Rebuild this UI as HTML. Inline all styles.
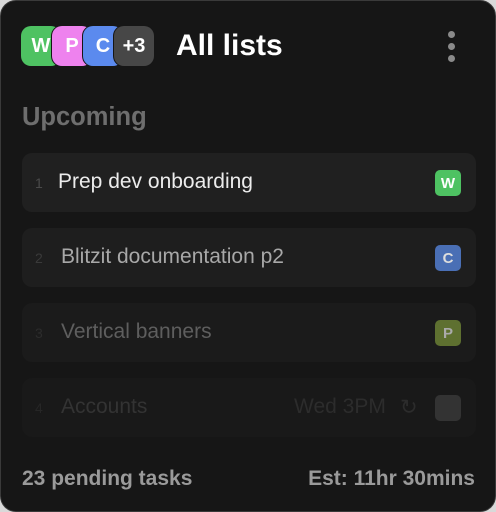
<!DOCTYPE html>
<html><head><style>
html,body{margin:0;padding:0;background:#d9d9d9;}
body{width:496px;height:512px;overflow:hidden;font-family:"Liberation Sans",sans-serif;}
.card{position:absolute;left:0;top:0;width:494px;height:510px;background:#161616;border:1px solid #3a3a3a;border-radius:16px;}
.av{position:absolute;top:25px;width:40px;height:40px;border-radius:10px;color:#fff;font-weight:bold;font-size:20px;display:flex;align-items:center;justify-content:center;box-shadow:0 0 0 1px #161616;}
.title{position:absolute;left:175px;top:28px;color:#fff;font-weight:bold;font-size:30px;}
.dots{position:absolute;left:447px;top:30px;}
.dots i{display:block;width:7px;height:7px;border-radius:50%;background:#8a8a8a;margin-bottom:5px;}
.up{position:absolute;left:21px;top:102px;color:#6e6e6e;font-weight:bold;font-size:25.5px;}
.row{position:absolute;left:21px;width:454px;height:59px;border-radius:10px;}
.row .n{position:absolute;left:13px;top:22px;font-size:14px;}
.row .t{position:absolute;left:36px;top:17px;font-size:21px;}
.row .b{position:absolute;left:413px;top:17px;width:26px;height:26px;border-radius:5px;font-weight:bold;font-size:15px;display:flex;align-items:center;justify-content:center;}
.foot{position:absolute;top:466px;font-size:21px;font-weight:bold;color:#9a9a9a;}
</style></head><body>
<div class="card">
<div class="av" style="left:20px;background:#4ec262">W</div>
<div class="av" style="left:51px;background:#ee82ee">P</div>
<div class="av" style="left:82px;background:#5b8aee">C</div>
<div class="av" style="left:113px;background:#474747">+3</div>
<div class="title">All lists</div>
<div class="dots"><i></i><i></i><i></i></div>
<div class="up">Upcoming</div>
<div class="row" style="top:152px;background:#202020"><span class="n" style="color:#4a4a4a">1</span><span class="t" style="color:#ececec">Prep dev onboarding</span><span class="b" style="background:#4ec262;color:#fff">W</span></div>
<div class="row" style="top:227px;background:#1e1e1e"><span class="n" style="color:#3a3a3a">2</span><span class="t" style="left:39px;color:#a8a8a8">Blitzit documentation p2</span><span class="b" style="background:#4a6fb5;color:#ddd">C</span></div>
<div class="row" style="top:302px;background:#1b1b1b"><span class="n" style="color:#2c2c2c">3</span><span class="t" style="left:39px;color:#5e5e5e">Vertical banners</span><span class="b" style="background:#5e7030;color:#aaa">P</span></div>
<div class="row" style="top:377px;background:#191919"><span class="n" style="color:#262626">4</span><span class="t" style="left:39px;color:#333">Accounts</span><span class="t" style="left:272px;color:#2c2c2c">Wed 3PM</span><span class="t" style="left:378px;color:#2c2c2c">↻</span><span class="b" style="background:#333"></span></div>
<div class="foot" style="left:21px">23 pending tasks</div>
<div class="foot" style="right:20px">Est: 11hr 30mins</div>
</div>
</body></html>
